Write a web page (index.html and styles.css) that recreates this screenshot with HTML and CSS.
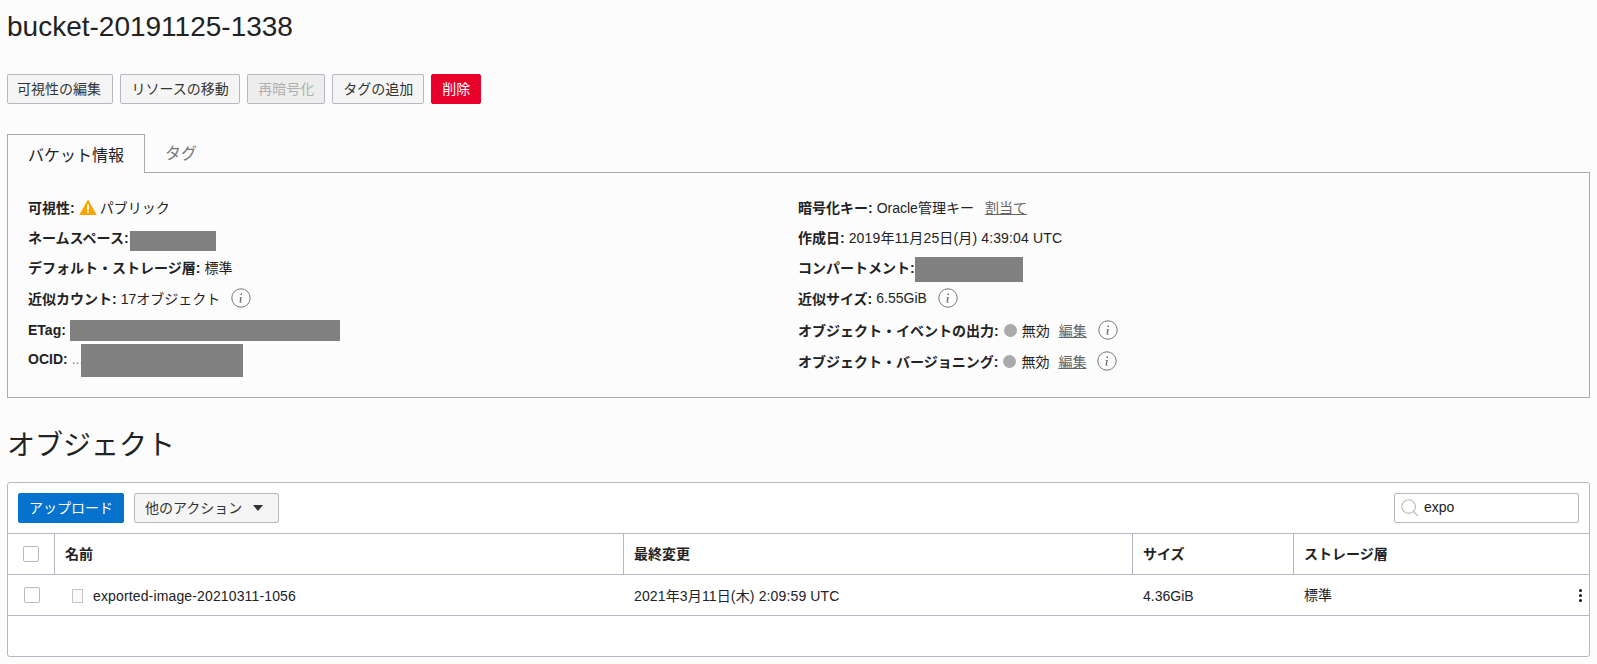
FILE: index.html
```html
<!DOCTYPE html>
<html lang="ja">
<head>
<meta charset="utf-8">
<title>bucket-20191125-1338</title>
<link rel="stylesheet" href="styles.css">
</head>
<body>
<svg class="defs" width="0" height="0" aria-hidden="true">
  <symbol id="info" viewBox="0 0 20 20">
    <circle cx="10" cy="10" r="9.2" fill="none" stroke="#777" stroke-width="1"/>
    <path d="M9.6 5.6h1.4v1.5H9.6zM8.6 9h2.2l-1 5h1.1v.6H8.4l1-5H8.5z" fill="#666"/>
  </symbol>
</svg>
<h1 class="title">bucket-20191125-1338</h1>
<div class="actions">
  <button class="btn shift">可視性の編集</button>
  <button class="btn wide">リソースの移動</button>
  <button class="btn disabled">再暗号化</button>
  <button class="btn">タグの追加</button>
  <button class="btn danger">削除</button>
</div>
<div class="tabs">
  <div class="tab active">バケット情報</div>
  <div class="tab">タグ</div>
</div>
<section class="panel">
  <div class="col col-left">
    <div class="row first"><b>可視性:</b>
      <svg class="warn" viewBox="0 0 18 16"><path d="M9 .5 17.8 16H.2z" fill="#f7a600"/><path d="M8.1 5.5h1.8v5.5H8.1zM8.1 12h1.8v1.8H8.1z" fill="#fff"/></svg>
      <span class="val">パブリック</span></div>
    <div class="row"><b>ネームスペース:</b><span class="redact r-ns"></span></div>
    <div class="row"><b>デフォルト・ストレージ層:</b><span class="val">標準</span></div>
    <div class="row fourth"><b>近似カウント:</b><span class="val">17オブジェクト</span><svg class="info"><use href="#info"/></svg></div>
    <div class="row drop"><b>ETag:</b><span class="redact r-etag"></span></div>
    <div class="row lift"><b>OCID:</b><span class="val dots">...</span><span class="redact r-ocid"></span></div>
  </div>
  <div class="col col-right">
    <div class="row first"><b>暗号化キー:</b><span class="val">Oracle管理キー</span><a class="link" href="#">割当て</a></div>
    <div class="row"><b>作成日:</b><span class="val latin">2019年11月25日(月) 4:39:04 UTC</span></div>
    <div class="row"><b>コンパートメント:</b><span class="redact r-comp"></span></div>
    <div class="row fourth"><b>近似サイズ:</b><span class="val">6.55GiB</span><svg class="info"><use href="#info"/></svg></div>
    <div class="row drop"><b>オブジェクト・イベントの出力:</b><i class="dot"></i><span class="val">無効</span><a class="link edit" href="#">編集</a><svg class="info"><use href="#info"/></svg></div>
    <div class="row nudge"><b>オブジェクト・バージョニング:</b><i class="dot"></i><span class="val">無効</span><a class="link edit" href="#">編集</a><svg class="info"><use href="#info"/></svg></div>
  </div>
</section>
<h2 class="subtitle">オブジェクト</h2>
<section class="table-card">
  <div class="toolbar">
    <button class="btn primary">アップロード</button>
    <button class="btn more">他のアクション<i class="caret"></i></button>
    <div class="search">
      <svg class="search-icon" viewBox="0 0 18 18"><circle cx="7.6" cy="7.6" r="6.8" fill="none" stroke="#bbb" stroke-width="1.1"/><path d="m12.6 12.6 4.4 4.4" stroke="#bbb" stroke-width="1.3"/></svg>
      <span class="search-text">expo</span>
    </div>
  </div>
  <div class="grid head">
    <div class="cell check"><i class="box"></i></div>
    <div class="cell up">名前</div>
    <div class="cell up">最終変更</div>
    <div class="cell up">サイズ</div>
    <div class="cell up">ストレージ層</div>
  </div>
  <div class="grid body-row">
    <div class="cell check"><i class="box"></i></div>
    <div class="cell name down"><i class="file"></i><span class="latin">exported-image-20210311-1056</span></div>
    <div class="cell"><span class="latin">2021年3月11日(木) 2:09:59 UTC</span></div>
    <div class="cell down">4.36GiB</div>
    <div class="cell last up">標準<span class="kebab"><i></i><i></i><i></i></span></div>
  </div>
  <div class="empty"></div>
</section>
</body>
</html>
```
FILE: styles.css
```css
* { box-sizing: border-box; }
html, body { margin: 0; padding: 0; }
body {
  background: #fcfcfc;
  color: #222;
  font-family: "Liberation Sans", "Noto Sans CJK JP", sans-serif;
  font-size: 14px;
  padding: 0 7px;
  height: 664px;
  overflow: hidden;
}
.defs { position: absolute; }
.title { margin: 0; padding-top: 10px; height: 74px; font-size: 28px; line-height: 34px; font-weight: 400; }
.actions { display: flex; gap: 7px; height: 30px; }
.btn {
  height: 30px; padding: 0 10px 2px; border: 1px solid #b3b8c2; border-radius: 2px;
  background: #f5f5f5; color: #333; font: inherit; font-size: 14px; white-space: nowrap;
}
.btn.shift { padding: 0 11px 2px 9px; }
.btn.wide { padding: 0 10.5px 2px; }
.btn.disabled { background: #ededed; color: #b0b0b0; }
.btn.danger { background: #e8002b; border-color: #e8002b; color: #fff; }
.btn.primary { background: #0572ce; border-color: #0572ce; color: #fff; }
.btn.more { display: flex; align-items: center; padding-right: 15px; }
.caret { width: 0; height: 0; margin: 2px 0 0 11px; border: 5.5px solid transparent; border-top: 6px solid #333; border-bottom: 0; }
.tabs { display: flex; margin-top: 30px; height: 39px; }
.tab { width: 68px; padding: 9px 0 0 20px; color: #777; font-size: 16px; line-height: 22px; white-space: nowrap; }
.tab.active {
  width: 138px; padding-top: 10px; color: #222; background: #fcfcfc; border: 1px solid #aaa; border-bottom: 0;
  height: 39px; position: relative; z-index: 1;
}
.panel {
  display: grid; grid-template-columns: 770px 1fr; margin-top: -1px; width: 1583px; height: 226px; padding: 18px 0 0 20px;
  border: 1px solid #aaa; background: #fcfcfc;
}
.col { display: flex; flex-direction: column; }
.row { display: flex; align-items: center; flex: none; height: 30px; white-space: nowrap; font-size: 14px; }
.row.first { height: 31px; }
.row.fourth { margin-top: 1px; }
.row.drop { margin-top: 2px; }
.row.lift { margin-top: -1px; }
.row.nudge { margin-top: 1px; }
.row b { font-weight: 700; font-size: 14px; margin-right: 4px; }
.val { font-size: 14px; }
.latin { letter-spacing: .14px; }
.dots { color: #888; }
.warn { width: 18px; height: 16px; margin: 0 3px 0 0; }
.info { width: 20px; height: 20px; margin-left: 11px; }
.link { color: #666; text-decoration: underline; margin-left: 11px; }
.link.edit { margin-left: 9px; }
.dot { width: 13px; height: 13px; margin: 0 5px 0 1px; border-radius: 50%; background: #aaa; }
.redact { display: inline-block; background: #808080; flex: none; }
.r-ns { width: 86px; height: 20px; margin: 8px 0 0 -3px; }
.r-etag { width: 270px; height: 21px; margin-left: 0; }
.r-ocid { width: 162px; height: 33px; margin: 2px 0 0 -2px; }
.r-comp { width: 108px; height: 25px; margin: 4px 0 0 -4px; }
.subtitle { margin: 0; height: 84px; padding-top: 28px; font-size: 28px; line-height: 40px; font-weight: 400; }
.table-card { width: 1583px; height: 175px; border: 1px solid #b3b8c2; border-radius: 3px; background: #fff; }
.toolbar { display: flex; align-items: center; gap: 10px; height: 51px; padding: 0 10px; border-bottom: 1px solid #b3b8c2; }
.search {
  display: flex; align-items: center; margin-left: auto; width: 185px; height: 30px; padding: 0 5px 0 6px;
  border: 1px solid #b3b8c2; border-radius: 2px; background: #fff; gap: 5px;
}
.search-icon { width: 18px; height: 18px; }
.search-text { padding-bottom: 2px; }
.grid { display: grid; grid-template-columns: 47px 569px 509px 161px 1fr; height: 41px; border-bottom: 1px solid #b3b8c2; align-items: stretch; }
.cell { display: flex; align-items: center; padding-left: 10px; border-right: 1px solid #b3b8c2; white-space: nowrap; }
.cell:last-child { border-right: 0; }
.cell.up { padding-bottom: 2px; }
.cell.down { padding-top: 2px; }
.head .cell { font-weight: 700; }
.body-row .cell { border-right: 0; }
.cell.check { justify-content: center; padding-left: 0; }
.box { width: 16px; height: 16px; border: 1px solid #b3b8c2; border-radius: 2px; background: #fff; }
.name { padding-left: 17px; }
.file { width: 11px; height: 14px; margin-right: 10px; border: 1px solid #c4c4c4; background: #fafafa; }
.last { justify-content: space-between; padding-right: 7px; }
.kebab { display: flex; flex-direction: column; gap: 2px; margin-top: 2px; }
.kebab i { width: 3px; height: 3px; border-radius: 50%; background: #111; }
```
